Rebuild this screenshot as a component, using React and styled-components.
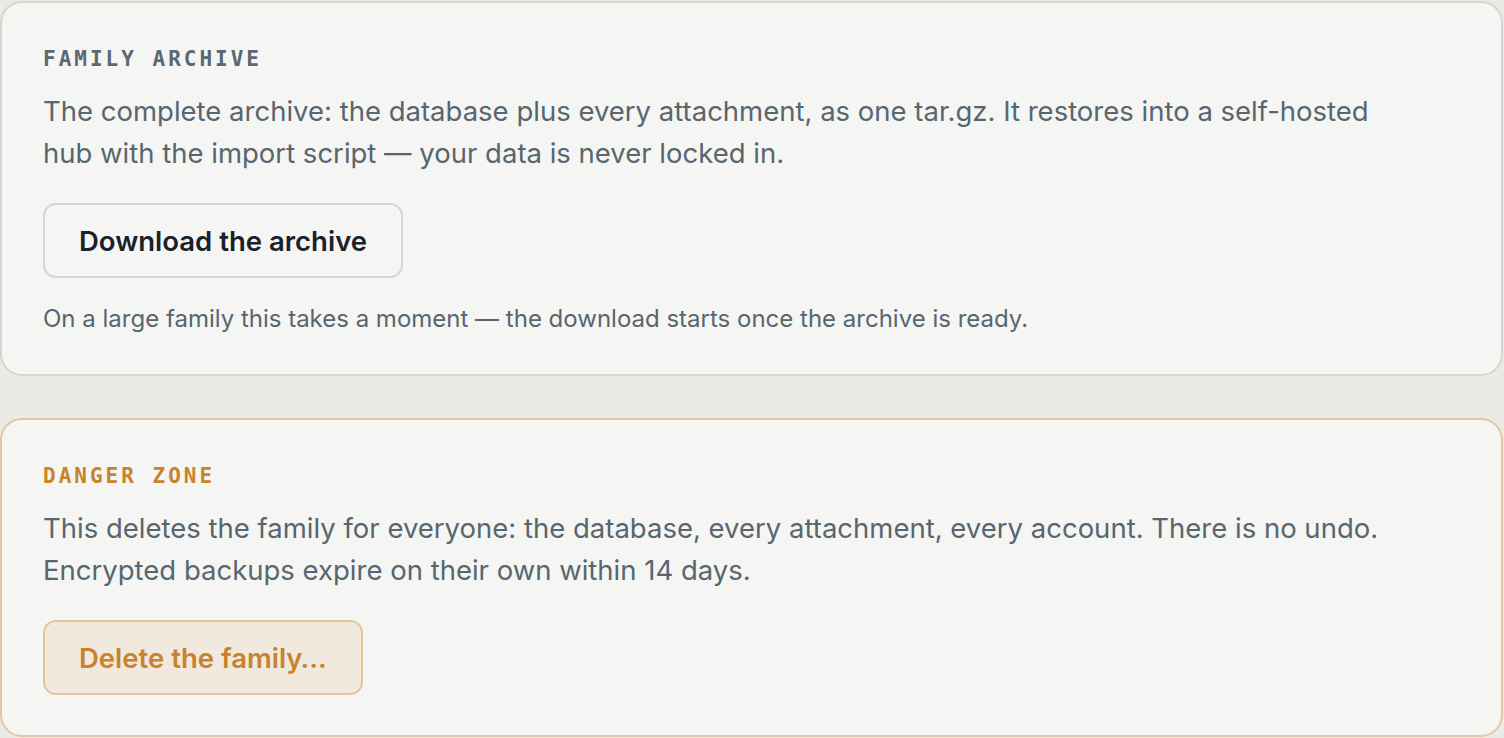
import React from "react";
import styled, { createGlobalStyle } from "styled-components";

const GlobalStyle = createGlobalStyle`
  html, body {
    margin: 0;
    padding: 0;
    background: #eaebe6;
  }
  body {
    font-family: "Inter", "Noto Sans", sans-serif;
    -webkit-font-smoothing: antialiased;
  }
  * {
    box-sizing: border-box;
  }
`;

const Page = styled.div`
  display: flex;
  flex-direction: column;
  gap: 42px;
  padding: 1px 1px 1px 0;
`;

const Card = styled.section`
  background: #f5f5f3;
  border: 2px solid ${(p) => (p.$danger ? "#e4c79f" : "#d3d7cf")};
  border-radius: 22px;
  padding: 44px 41px 40px;
  display: flex;
  flex-direction: column;
  align-items: flex-start;
`;

const Heading = styled.h2`
  margin: 0;
  font-family: "DejaVu Sans Mono", "Liberation Mono", monospace;
  font-size: 21px;
  line-height: 24px;
  font-weight: 700;
  letter-spacing: 3px;
  text-transform: uppercase;
  color: ${(p) => (p.$danger ? "#c8832b" : "#5a6872")};
`;

const Body = styled.p`
  margin: 19px 0 0;
  max-width: 1360px;
  font-size: 27.5px;
  line-height: 42px;
  color: #57666f;
`;

const Button = styled.button`
  margin-top: 29px;
  height: 75px;
  padding: 0 34px;
  border-radius: 13px;
  font-family: "Inter", "Noto Sans", sans-serif;
  font-size: 27.5px;
  font-weight: 600;
  cursor: pointer;
  border: 2px solid ${(p) => (p.$danger ? "#e2c59c" : "#d3d7cf")};
  background: ${(p) => (p.$danger ? "#f2e9de" : "#f5f5f3")};
  color: ${(p) => (p.$danger ? "#c8832b" : "#19222a")};
`;

const Note = styled.p`
  margin: 26px 0 0;
  font-size: 24px;
  line-height: 30px;
  color: #57666f;
`;

export default function App() {
  return (
    <>
      <GlobalStyle />
      <Page>
        <Card>
          <Heading>Family archive</Heading>
          <Body>
            The complete archive: the database plus every attachment, as one
            tar.gz. It restores into a self-hosted hub with the import script
            — your data is never locked in.
          </Body>
          <Button>Download the archive</Button>
          <Note>
            On a large family this takes a moment — the download starts once
            the archive is ready.
          </Note>
        </Card>
        <Card $danger>
          <Heading $danger>Danger zone</Heading>
          <Body>
            This deletes the family for everyone: the database, every
            attachment, every account. There is no undo. Encrypted backups
            expire on their own within 14 days.
          </Body>
          <Button $danger>Delete the family…</Button>
        </Card>
      </Page>
    </>
  );
}
